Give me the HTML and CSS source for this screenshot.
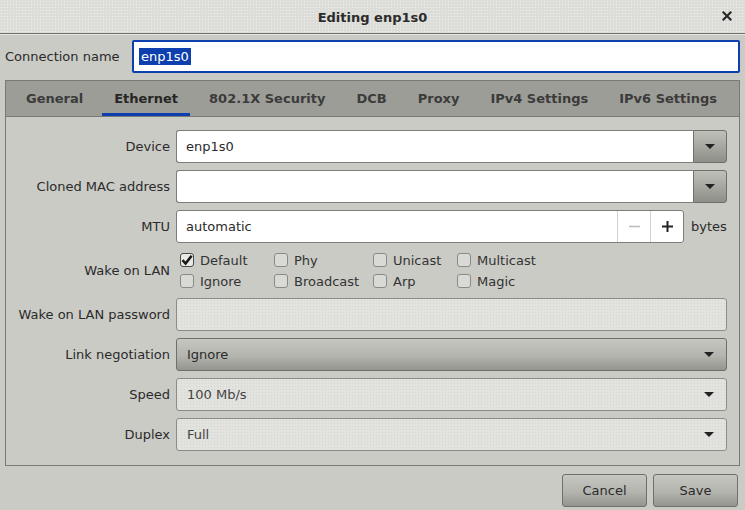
FILE: index.html
```html
<!DOCTYPE html>
<html>
<head>
<meta charset="utf-8">
<link rel="stylesheet" href="styles.css">
</head>
<body>
<div class="window">
  <header class="titlebar">
    <span class="title">Editing enp1s0</span>
    <span class="close">
      <svg width="10" height="10" viewBox="0 0 10 10"><path d="M1.5 1.5 L8.5 8.5 M8.5 1.5 L1.5 8.5" stroke="#2a2a2a" stroke-width="2.2" stroke-linecap="square"/></svg>
    </span>
  </header>

  <div class="name-row">
    <label class="name-label">Connection name</label>
    <div class="name-entry"><span class="selected">enp1s0</span></div>
  </div>

  <div class="notebook">
    <nav class="tabs">
      <span class="tab">General</span>
      <span class="tab active">Ethernet</span>
      <span class="tab">802.1X Security</span>
      <span class="tab">DCB</span>
      <span class="tab">Proxy</span>
      <span class="tab">IPv4 Settings</span>
      <span class="tab">IPv6 Settings</span>
    </nav>
    <div class="page">
      <div class="lbl">Device</div>
      <div class="combo-entry">
        <div class="entry joined">enp1s0</div>
        <div class="drop-btn"><span class="arrow"></span></div>
      </div>

      <div class="lbl">Cloned MAC address</div>
      <div class="combo-entry">
        <div class="entry joined"></div>
        <div class="drop-btn"><span class="arrow"></span></div>
      </div>

      <div class="lbl">MTU</div>
      <div class="mtu-row">
        <div class="spin">
          <span class="spin-text">automatic</span>
          <span class="spin-btn minus">
            <svg width="11" height="11" viewBox="0 0 11 11"><path d="M0 5.5 H11" stroke="#bdbdbd" stroke-width="1.6"/></svg>
          </span>
          <span class="spin-btn plus">
            <svg width="11" height="11" viewBox="0 0 11 11"><path d="M0 5.5 H11 M5.5 0 V11" stroke="#222" stroke-width="2"/></svg>
          </span>
        </div>
        <span class="unit">bytes</span>
      </div>

      <div class="lbl">Wake on LAN</div>
      <div class="checks">
        <label class="check"><span class="box checked"><svg width="12" height="12" viewBox="0 0 12 12"><path d="M1.5 6.2 L4.6 9.6 L10.6 1.8" fill="none" stroke="#1a1a1a" stroke-width="2.6"/></svg></span>Default</label>
        <label class="check"><span class="box"></span>Phy</label>
        <label class="check"><span class="box"></span>Unicast</label>
        <label class="check"><span class="box"></span>Multicast</label>
        <label class="check"><span class="box"></span>Ignore</label>
        <label class="check"><span class="box"></span>Broadcast</label>
        <label class="check"><span class="box"></span>Arp</label>
        <label class="check"><span class="box"></span>Magic</label>
      </div>

      <div class="lbl">Wake on LAN password</div>
      <div class="entry disabled"></div>

      <div class="lbl">Link negotiation</div>
      <div class="combo button-combo"><span>Ignore</span><span class="arrow"></span></div>

      <div class="lbl">Speed</div>
      <div class="combo disabled-combo"><span>100 Mb/s</span><span class="arrow"></span></div>

      <div class="lbl">Duplex</div>
      <div class="combo disabled-combo"><span>Full</span><span class="arrow"></span></div>
    </div>
  </div>

  <div class="actions">
    <button class="btn">Cancel</button>
    <button class="btn">Save</button>
  </div>
</div>
</body>
</html>
```

FILE: styles.css
```css
* { box-sizing: border-box; }

html, body {
  margin: 0;
  padding: 0;
  background: #cbcbc6;
}

body {
  font-family: "DejaVu Sans", "Liberation Sans", sans-serif;
  font-size: 13px;
  color: #2a2a2a;
}

.window {
  width: 745px;
  height: 510px;
  background: #cbcbc6;
}

.titlebar {
  height: 34px;
  position: relative;
  display: flex;
  align-items: center;
  justify-content: center;
  background-color: #dcdcd8;
  background-image: radial-gradient(circle, #eeeeeb 0.6px, transparent 0.9px);
  background-size: 3px 3px;
  border-bottom: 1px solid #6f6f6b;
  box-shadow: 0 1px 0 #e4e4e0;
}

.title {
  font-weight: bold;
  color: #2b2b2b;
  padding-top: 1px;
}

.close {
  position: absolute;
  right: 13px;
  top: 11px;
  display: flex;
}

.name-row {
  display: flex;
  align-items: center;
  height: 33px;
  margin-top: 6px;
  padding-left: 5px;
}

.name-label {
  width: 127px;
}

.name-entry {
  width: 608px;
  height: 33px;
  border: 2px solid #0d3fae;
  border-radius: 2px;
  background: #fff;
  display: flex;
  align-items: center;
  padding-left: 5px;
}

.selected {
  background: #0d3fae;
  color: #fff;
  line-height: 17px;
  padding: 0 2px;
}

.notebook {
  margin: 7px 5px 0 5px;
  width: 735px;
  height: 386px;
  border: 1px solid #797975;
  display: flex;
  flex-direction: column;
}

.tabs {
  height: 36px;
  background: #9d9d97;
  border-bottom: 1px solid #797975;
  display: flex;
  gap: 7px;
  padding-left: 8px;
}

.tab {
  padding: 3px 12px 0 12px;
  display: flex;
  align-items: center;
  font-weight: bold;
  color: #3b3b3b;
  border-bottom: 3px solid transparent;
}

.tab.active {
  color: #262626;
  border-bottom-color: #0d3fae;
}

.page {
  flex: 1;
  padding: 13px 12px 14px 12px;
  display: grid;
  grid-template-columns: 152px 1fr;
  grid-template-rows: 33px 33px 33px 41px 33px 33px 33px 33px;
  column-gap: 6px;
  row-gap: 7px;
}

.lbl {
  display: flex;
  align-items: center;
  justify-content: flex-end;
  color: #2a2a2a;
}

.entry {
  height: 33px;
  border: 1px solid #7d7d79;
  border-radius: 3px;
  background: #fff;
  display: flex;
  align-items: center;
  padding-left: 9px;
  color: #2a2a2a;
}

.entry.disabled {
  background-color: #e2e2df;
  background-image: radial-gradient(circle, #d4d4d0 0.5px, transparent 0.8px);
  background-size: 3px 3px;
  border-color: #8b8b87;
}

.combo-entry {
  display: flex;
  width: 551px;
}

.entry.joined {
  flex: 1;
  border-radius: 3px 0 0 3px;
  border-right: none;
}

.drop-btn {
  width: 34px;
  height: 33px;
  border: 1px solid #6f6f6b;
  border-radius: 0 3px 3px 0;
  background: linear-gradient(#c0c0bb, #8f8f8a);
  display: flex;
  align-items: center;
  justify-content: center;
}

.arrow {
  width: 0;
  height: 0;
  border-left: 5px solid transparent;
  border-right: 5px solid transparent;
  border-top: 5px solid #222;
}

.mtu-row {
  display: flex;
  align-items: center;
  gap: 7px;
}

.spin {
  width: 508px;
  height: 33px;
  border: 1px solid #7d7d79;
  border-radius: 3px;
  background: #fff;
  display: flex;
  align-items: stretch;
}

.spin-text {
  flex: 1;
  display: flex;
  align-items: center;
  padding-left: 9px;
}

.spin-btn {
  width: 33px;
  display: flex;
  align-items: center;
  justify-content: center;
  border-left: 1px solid #d2d2d0;
}

.checks {
  padding-left: 4px;
  display: grid;
  grid-template-columns: 94px 99px 84px auto;
  grid-template-rows: 21px 21px;
  align-content: center;
}

.check {
  display: flex;
  align-items: center;
  gap: 6px;
  color: #333;
}

.box {
  width: 14px;
  height: 14px;
  border: 1px solid #8a8a86;
  border-radius: 3px;
  background: #d9d9d5;
  display: flex;
  align-items: center;
  justify-content: center;
}

.box.checked {
  background: #e9e9e6;
  border-color: #4a4a46;
}

.combo {
  height: 33px;
  border-radius: 3px;
  display: flex;
  align-items: center;
  justify-content: space-between;
  padding: 0 12px 0 10px;
  width: 551px;
}

.button-combo {
  border: 1px solid #6f6f6b;
  background: linear-gradient(#c7c7c2, #b4b4af 55%, #959590);
  color: #2a2a2a;
}

.disabled-combo {
  border: 1px solid #8b8b87;
  background-color: #e2e2df;
  background-image: radial-gradient(circle, #d4d4d0 0.5px, transparent 0.8px);
  background-size: 3px 3px;
  color: #444;
}

.actions {
  display: flex;
  justify-content: flex-end;
  gap: 6px;
  padding: 8px 7px 0 0;
}

.btn {
  width: 85px;
  height: 33px;
  border: 1px solid #6f6f6b;
  border-radius: 3px;
  background: linear-gradient(#c7c7c2, #b4b4af 55%, #959590);
  font-family: "DejaVu Sans", "Liberation Sans", sans-serif;
  font-size: 13px;
  color: #2a2a2a;
  padding: 0;
}
```
